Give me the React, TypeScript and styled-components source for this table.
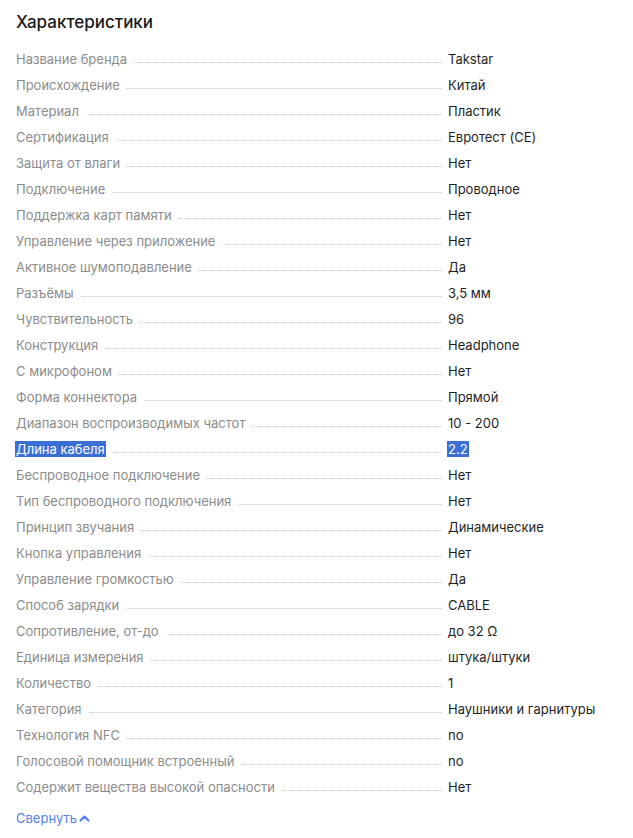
import React from "react";
import styled, { createGlobalStyle } from "styled-components";

const Global = createGlobalStyle`
  html, body { margin: 0; padding: 0; background: #ffffff; }
  body { font-family: Inter, "Noto Sans", Roboto, sans-serif; -webkit-font-smoothing: antialiased; }
`;

const Section = styled.section`
  padding: 10px 16px 0 16px;
  width: 633px;
  box-sizing: border-box;
`;

const Title = styled.h2`
  margin: 0 0 12px 0;
  font-size: 17px;
  line-height: 24px;
  font-weight: 500;
  color: #1a1a1a;
`;

const List = styled.dl`
  margin: 0;
  display: grid;
  grid-template-columns: 1fr 169px;
  column-gap: 7px;
`;

const Term = styled.dt`
  display: flex;
  align-items: baseline;
  height: 26px;
  line-height: 26px;
  font-size: 13px;
  color: #8c8c8c;
  min-width: 0;
`;

const Label = styled.span`
  white-space: nowrap;
`;

const Leader = styled.span`
  flex: 1;
  margin-left: 7px;
  border-bottom: 1px dotted #c4c4c4;
  height: 0;
  position: relative;
  top: -1px;
`;

const Value = styled.dd`
  margin: 0;
  height: 26px;
  line-height: 26px;
  font-size: 13px;
  color: #1f1f1f;
  white-space: nowrap;
`;

const Selected = styled.span`
  background: #3a6fd6;
  color: #ffffff;
  padding: 0 1px;
  margin-left: -1px;
`;

const Toggle = styled.button`
  margin-top: 9px;
  padding: 0;
  border: none;
  background: none;
  display: inline-flex;
  align-items: center;
  gap: 2px;
  font-family: inherit;
  font-size: 13px;
  line-height: 18px;
  color: #5580f2;
  cursor: pointer;
`;

const rows: [string, string][] = [
  ["Название бренда", "Takstar"],
  ["Происхождение", "Китай"],
  ["Материал", "Пластик"],
  ["Сертификация", "Евротест (CE)"],
  ["Защита от влаги", "Нет"],
  ["Подключение", "Проводное"],
  ["Поддержка карт памяти", "Нет"],
  ["Управление через приложение", "Нет"],
  ["Активное шумоподавление", "Да"],
  ["Разъёмы", "3,5 мм"],
  ["Чувствительность", "96"],
  ["Конструкция", "Headphone"],
  ["С микрофоном", "Нет"],
  ["Форма коннектора", "Прямой"],
  ["Диапазон воспроизводимых частот", "10 - 200"],
  ["Длина кабеля", "2.2"],
  ["Беспроводное подключение", "Нет"],
  ["Тип беспроводного подключения", "Нет"],
  ["Принцип звучания", "Динамические"],
  ["Кнопка управления", "Нет"],
  ["Управление громкостью", "Да"],
  ["Способ зарядки", "CABLE"],
  ["Сопротивление, от-до", "до 32 Ω"],
  ["Единица измерения", "штука/штуки"],
  ["Количество", "1"],
  ["Категория", "Наушники и гарнитуры"],
  ["Технология NFC", "no"],
  ["Голосовой помощник встроенный", "no"],
  ["Содержит вещества высокой опасности", "Нет"],
];

export default function App() {
  return (
    <>
      <Global />
      <Section>
        <Title>Характеристики</Title>
        <List>
          {rows.map(([k, v]) => {
            const sel = k === "Длина кабеля";
            return (
              <React.Fragment key={k}>
                <Term>
                  <Label>{sel ? <Selected>{k}</Selected> : k}</Label>
                  <Leader />
                </Term>
                <Value>{sel ? <Selected>{v}</Selected> : v}</Value>
              </React.Fragment>
            );
          })}
        </List>
        <Toggle>
          Свернуть
          <svg width="11" height="8" viewBox="0 0 11 8" fill="none">
            <polyline points="1.5,6.5 5.5,2.5 9.5,6.5" stroke="#5580f2" strokeWidth="2.2" strokeLinecap="round" strokeLinejoin="round" />
          </svg>
        </Toggle>
      </Section>
    </>
  );
}
